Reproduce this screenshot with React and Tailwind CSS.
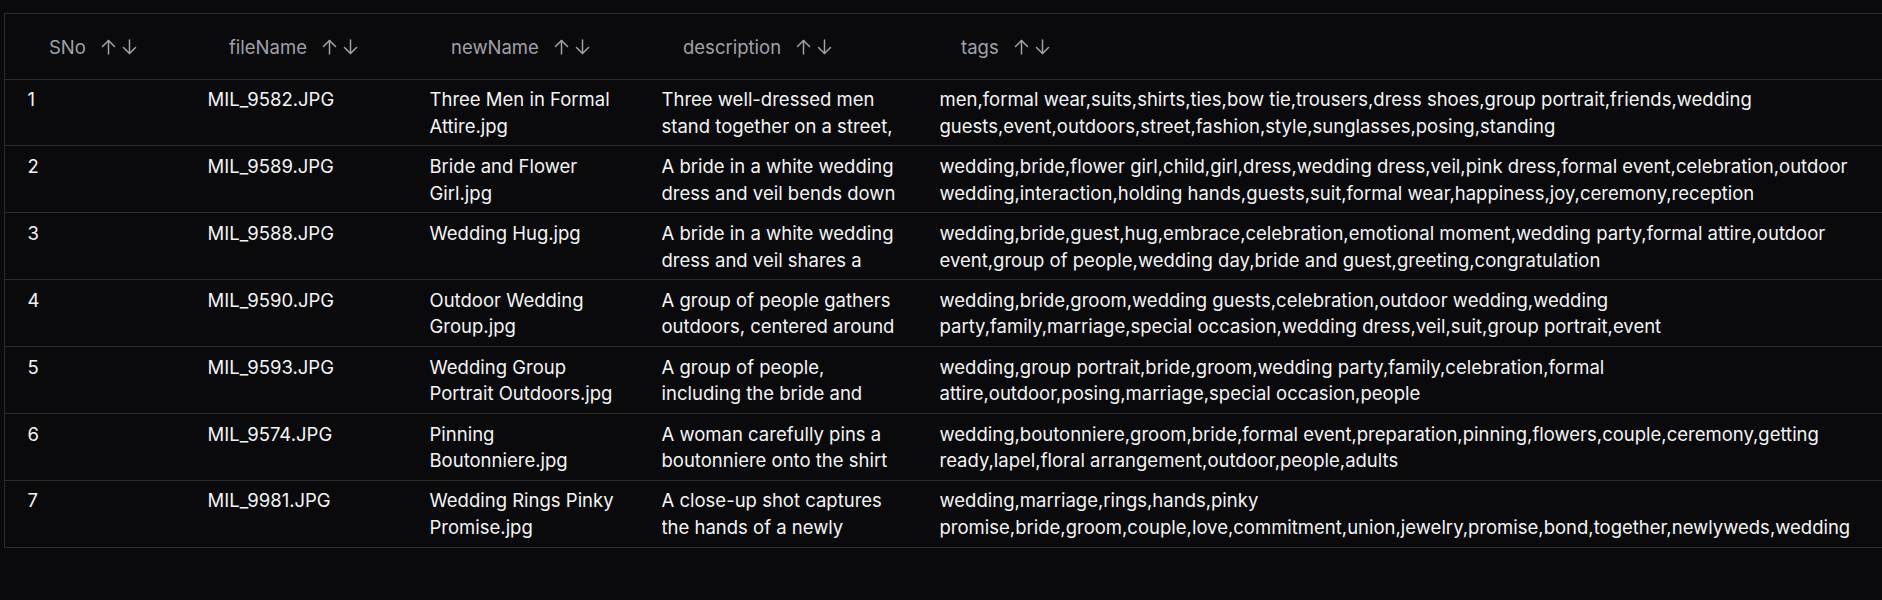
const rows = [
  {
    sno: 1,
    fileName: 'MIL_9582.JPG',
    newName: 'Three Men in Formal\nAttire.jpg',
    description: 'Three well-dressed men\nstand together on a street,',
    tags: 'men,formal wear,suits,shirts,ties,bow tie,trousers,dress shoes,group portrait,friends,wedding\nguests,event,outdoors,street,fashion,style,sunglasses,posing,standing',
  },
  {
    sno: 2,
    fileName: 'MIL_9589.JPG',
    newName: 'Bride and Flower\nGirl.jpg',
    description: 'A bride in a white wedding\ndress and veil bends down',
    tags: 'wedding,bride,flower girl,child,girl,dress,wedding dress,veil,pink dress,formal event,celebration,outdoor\nwedding,interaction,holding hands,guests,suit,formal wear,happiness,joy,ceremony,reception',
  },
  {
    sno: 3,
    fileName: 'MIL_9588.JPG',
    newName: 'Wedding Hug.jpg',
    description: 'A bride in a white wedding\ndress and veil shares a',
    tags: 'wedding,bride,guest,hug,embrace,celebration,emotional moment,wedding party,formal attire,outdoor\nevent,group of people,wedding day,bride and guest,greeting,congratulation',
  },
  {
    sno: 4,
    fileName: 'MIL_9590.JPG',
    newName: 'Outdoor Wedding\nGroup.jpg',
    description: 'A group of people gathers\noutdoors, centered around',
    tags: 'wedding,bride,groom,wedding guests,celebration,outdoor wedding,wedding\nparty,family,marriage,special occasion,wedding dress,veil,suit,group portrait,event',
  },
  {
    sno: 5,
    fileName: 'MIL_9593.JPG',
    newName: 'Wedding Group\nPortrait Outdoors.jpg',
    description: 'A group of people,\nincluding the bride and',
    tags: 'wedding,group portrait,bride,groom,wedding party,family,celebration,formal\nattire,outdoor,posing,marriage,special occasion,people',
  },
  {
    sno: 6,
    fileName: 'MIL_9574.JPG',
    newName: 'Pinning\nBoutonniere.jpg',
    description: 'A woman carefully pins a\nboutonniere onto the shirt',
    tags: 'wedding,boutonniere,groom,bride,formal event,preparation,pinning,flowers,couple,ceremony,getting\nready,lapel,floral arrangement,outdoor,people,adults',
  },
  {
    sno: 7,
    fileName: 'MIL_9981.JPG',
    newName: 'Wedding Rings Pinky\nPromise.jpg',
    description: 'A close-up shot captures\nthe hands of a newly',
    tags: 'wedding,marriage,rings,hands,pinky\npromise,bride,groom,couple,love,commitment,union,jewelry,promise,bond,together,newlyweds,wedding',
  },
]

const columns = ['SNo', 'fileName', 'newName', 'description', 'tags']

function SortArrows() {
  return (
    <svg width="36" height="16" viewBox="0 0 36 16" fill="none" stroke="currentColor" strokeWidth="1.5" strokeLinecap="round" strokeLinejoin="round">
      {/* up */}
      <path d="M7.5 15V1.5" />
      <path d="M1.5 7.5 7.5 1.5l6 6" />
      {/* down */}
      <path d="M28.5 1v13.5" />
      <path d="M22.5 8.5l6 6 6-6" />
    </svg>
  )
}

export default function App() {
  return (
    <div
      className="min-h-screen bg-[#0a0a0c] pt-[13px] pl-[4px] overflow-hidden text-[18.5px] leading-[26.7px]"
      style={{ fontFamily: 'Inter, "Noto Sans", sans-serif' }}
    >
      <div className="w-[1960px] border-l border-t border-b border-[#2c2c2f]">
        <table className="w-full table-fixed border-collapse">
          <colgroup>
            <col className="w-[180px]" />
            <col className="w-[222px]" />
            <col className="w-[232px]" />
            <col className="w-[278px]" />
            <col />
          </colgroup>
          <thead>
            <tr className="border-b border-[#2c2c2f]">
              {columns.map((c) => (
                <th key={c} className="h-[65px] pl-[44px] pt-[2px] text-left font-normal text-[#a1a1aa] align-middle">
                  <span className="inline-flex items-center gap-[15px]">
                    {c}
                    <SortArrows />
                  </span>
                </th>
              ))}
            </tr>
          </thead>
          <tbody className="text-[#f4f4f5]">
            {rows.map((r, i) => (
              <tr key={r.sno} className={i < rows.length - 1 ? 'border-b border-[#2c2c2f]' : ''}>
                <td className="px-[22.5px] pt-[6.6px] pb-[5.9px] align-top">{r.sno}</td>
                <td className="px-[22.5px] pt-[6.6px] pb-[5.9px] align-top">{r.fileName}</td>
                <td className="px-[22.5px] pt-[6.6px] pb-[5.9px] align-top whitespace-pre">{r.newName}</td>
                <td className="px-[22.5px] pt-[6.6px] pb-[5.9px] align-top">
                  <div className="h-[53.4px] overflow-hidden whitespace-pre">{r.description}</div>
                </td>
                <td className="px-[22.5px] pt-[6.6px] pb-[5.9px] align-top">
                  <div className="h-[53.4px] overflow-hidden whitespace-pre">{r.tags}</div>
                </td>
              </tr>
            ))}
          </tbody>
        </table>
      </div>
    </div>
  )
}
